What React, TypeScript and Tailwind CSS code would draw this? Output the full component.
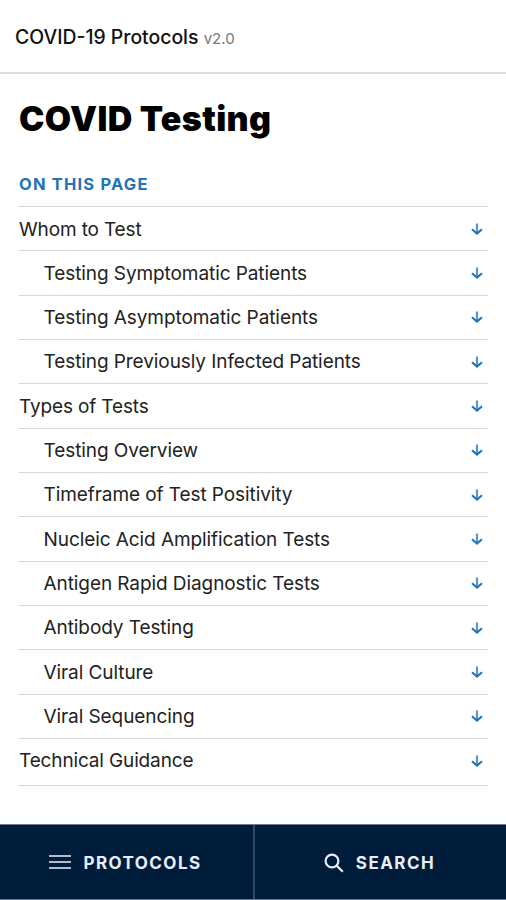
type Section = {
  label: string;
  nested?: boolean;
};

const sections: Section[] = [
  { label: 'Whom to Test' },
  { label: 'Testing Symptomatic Patients', nested: true },
  { label: 'Testing Asymptomatic Patients', nested: true },
  { label: 'Testing Previously Infected Patients', nested: true },
  { label: 'Types of Tests' },
  { label: 'Testing Overview', nested: true },
  { label: 'Timeframe of Test Positivity', nested: true },
  { label: 'Nucleic Acid Amplification Tests', nested: true },
  { label: 'Antigen Rapid Diagnostic Tests', nested: true },
  { label: 'Antibody Testing', nested: true },
  { label: 'Viral Culture', nested: true },
  { label: 'Viral Sequencing', nested: true },
  { label: 'Technical Guidance' },
];

function SectionLink({ label, nested }: Section) {
  return (
    <li className="h-[44.33px] border-b border-[#d6d6d6] last:h-[47px]">
      <a href="#" className="flex h-[45.5px] items-center justify-between pr-[5px]">
        <span className={nested ? 'pl-[24.5px]' : 'tracking-[-0.14px]'}>{label}</span>
        <svg className="w-3 h-3 mb-0.5" viewBox="0 0 12 12" fill="none" stroke="#2473b5">
          <path d="M6 0.5v10" strokeWidth="2.2" strokeOpacity="0.75" />
          <path d="M1 6.2l5 4.3 5-4.3" strokeWidth="2.1" />
        </svg>
      </a>
    </li>
  );
}

export default function App() {
  return (
    <div className="h-[900px] flex flex-col bg-white font-['Inter',sans-serif] text-[#222]">
      <header className="h-[74px] shrink-0 flex items-center border-b-2 border-[#dedede] px-[15px] pt-[3px]">
        <p className="text-[19.4px] font-[450] text-[#111] whitespace-nowrap">
          COVID-19 Protocols <span className="text-[15px] font-normal text-[#777]">v2.0</span>
        </p>
      </header>

      <main className="flex-1 pl-[19px] pr-[18px]">
        <h1 className="mt-[22px] text-[34px] leading-[46px] font-black tracking-[0.38px] text-black">COVID Testing</h1>
        <h2 className="mt-[30px] text-[16.5px] leading-6 font-bold tracking-[1.2px] text-[#2473b5]">ON THIS PAGE</h2>
        <ul className="mt-[10px] border-t border-[#d6d6d6] text-[19px] tracking-[-0.08px]">
          {sections.map((section) => (
            <SectionLink key={section.label} {...section} />
          ))}
        </ul>
      </main>

      {/* Bottom navigation */}
      <nav className="h-[76px] shrink-0 grid grid-cols-[255px_1fr] border-t border-b border-[#6f7b90] bg-[#001c3b] text-[#e9eefa] text-[17px] font-bold tracking-[1.45px]">
        <button className="flex items-center justify-center border-r-2 border-[#33496a] pt-0.5 pr-0.5">
          <svg className="w-[22px] h-4 mr-3 mb-0.5" viewBox="0 0 22 16" fill="none" stroke="#b3bccb" strokeWidth="2">
            <path d="M0 2h22M0 8h22M0 14h22" />
          </svg>
          <span className="pt-px">PROTOCOLS</span>
        </button>
        <button className="flex items-center justify-center pt-0.5 pr-0.5">
          <svg className="w-5 h-5 mr-3" viewBox="0 0 20 20" fill="none" stroke="currentColor" strokeWidth="2.2">
            <circle cx="8" cy="8" r="6.4" />
            <path d="M12.6 12.6l6.2 6.2" />
          </svg>
          <span className="pt-px">SEARCH</span>
        </button>
      </nav>
    </div>
  );
}
